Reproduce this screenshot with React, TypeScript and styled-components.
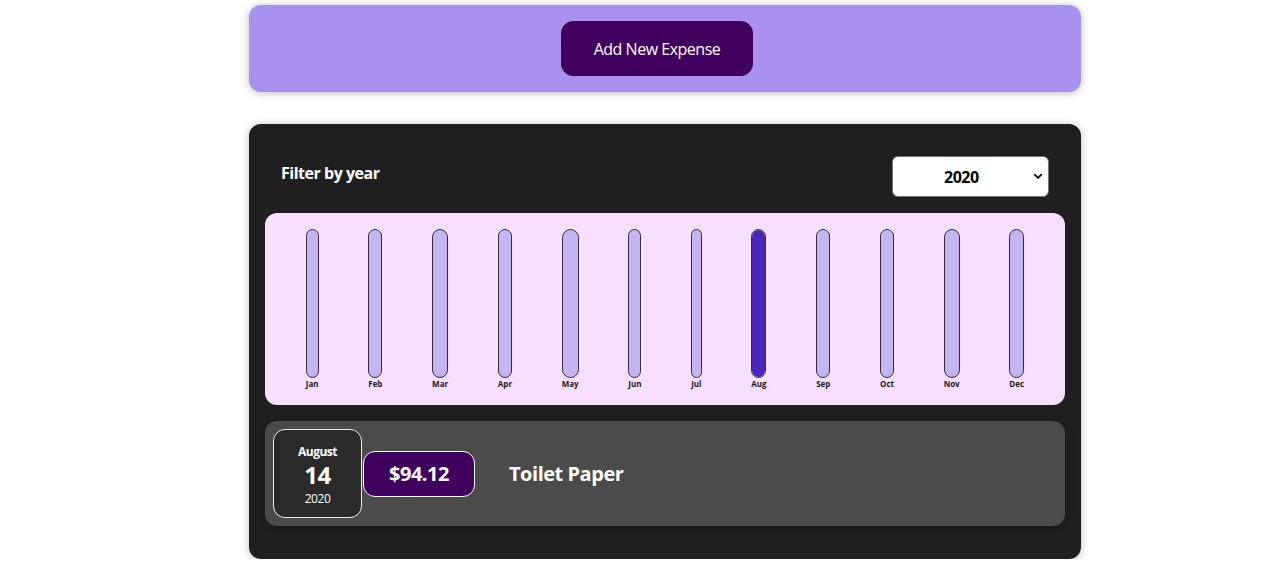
import React from "react";
import styled, { createGlobalStyle } from "styled-components";

const GlobalStyle = createGlobalStyle`
  * { box-sizing: border-box; }
  html { font-family: "Open Sans", "Noto Sans", sans-serif; letter-spacing: -0.03em; }
  body { margin: 0; background: #ffffff; }
`;

const Page = styled.div`
  padding: 5px 0 0 47px;
`;

const NewExpensePanel = styled.div`
  background-color: #a892ee;
  padding: 16px;
  margin: 0 auto 32px;
  width: 832px;
  border-radius: 12px;
  text-align: center;
  box-shadow: 0 1px 8px rgba(0, 0, 0, 0.25);
`;

const AddButton = styled.button`
  font: inherit;
  font-size: 16px;
  line-height: 21px;
  letter-spacing: -0.03em;
  cursor: pointer;
  padding: 17px 32px 15px;
  border: 1px solid #40005d;
  background-color: #40005d;
  color: white;
  border-radius: 12px;
  margin-right: 16px;
`;

const ExpensesPanel = styled.div`
  padding: 16px 16px 17px;
  background-color: rgb(31, 31, 31);
  margin: 0 auto;
  width: 832px;
  border-radius: 12px;
  box-shadow: 0 1px 8px rgba(0, 0, 0, 0.25);
`;

const Filter = styled.div`
  color: white;
  padding: 0 16px;
`;

const FilterControl = styled.div`
  display: flex;
  width: 100%;
  align-items: center;
  justify-content: space-between;
  margin: 16px 0;
`;

const FilterLabel = styled.label`
  font-weight: bold;
  font-size: 16px;
  margin-bottom: 8px;
`;

const SelectWrap = styled.div`
  position: relative;
  width: 157px;
  height: 41px;
`;

const YearSelect = styled.select`
  appearance: none;
  -webkit-appearance: none;
  font: inherit;
  font-weight: bold;
  font-size: 16px;
  letter-spacing: -0.03em;
  color: #000;
  background: #fff;
  width: 100%;
  height: 100%;
  padding: 0 20px 0 51px;
  border: 1px solid #767676;
  border-radius: 6px;
`;

const Chevron = styled.svg`
  position: absolute;
  right: 6px;
  top: 17px;
  pointer-events: none;
`;

const Chart = styled.div`
  padding: 16px;
  border-radius: 12px;
  background-color: #f8dfff;
  text-align: center;
  display: flex;
  justify-content: space-around;
  height: 192px;
`;

const ChartBarCol = styled.div`
  height: 100%;
  display: flex;
  flex-direction: column;
  align-items: center;
`;

const ChartBarInner = styled.div`
  height: 100%;
  width: 100%;
  border: 1px solid #313131;
  border-radius: 12px;
  background-color: #c3b4f3;
  display: flex;
  flex-direction: column;
  justify-content: flex-end;
  overflow: hidden;
`;

const ChartBarFill = styled.div`
  background-color: #4826b9;
  width: 100%;
`;

const ChartBarLabel = styled.div`
  font-weight: bold;
  font-size: 8px;
  line-height: 11px;
  letter-spacing: 0;
  text-align: center;
  color: #1a1a1a;
`;

const ExpenseItem = styled.div`
  display: flex;
  align-items: center;
  box-shadow: 0 2px 8px rgba(0, 0, 0, 0.25);
  padding: 8px;
  margin: 16px 0;
  border-radius: 12px;
  background-color: #4b4b4b;
`;

const DateBox = styled.div`
  display: flex;
  flex-direction: column;
  width: 89px;
  height: 89px;
  padding-top: 2px;
  border: 1px solid #ececec;
  background-color: #2a2a2a;
  color: white;
  border-radius: 12px;
  align-items: center;
  justify-content: center;
`;

const DateMonth = styled.div`
  font-size: 12px;
  font-weight: bold;
  line-height: 17px;
`;

const DateDay = styled.div`
  font-size: 24px;
  font-weight: bold;
  line-height: 30px;
`;

const DateYear = styled.div`
  font-size: 12px;
  line-height: 17px;
`;

const Price = styled.div`
  font-size: 20px;
  line-height: 27px;
  font-weight: bold;
  color: white;
  background-color: #40005d;
  border: 1px solid white;
  padding: 8px 25px 9px;
  border-radius: 12px;
  margin-left: 1px;
`;

const Title = styled.h2`
  font-size: 20px;
  margin: 0 0 0 34px;
  color: white;
  flex: 1;
`;

const months = ["Jan", "Feb", "Mar", "Apr", "May", "Jun", "Jul", "Aug", "Sep", "Oct", "Nov", "Dec"];
const values = [0, 0, 0, 0, 0, 0, 0, 94.12, 0, 0, 0, 0];

export default function App() {
  const max = Math.max(...values);
  return (
    <>
      <GlobalStyle />
      <Page>
        <NewExpensePanel>
          <AddButton>Add New Expense</AddButton>
        </NewExpensePanel>
        <ExpensesPanel>
          <Filter>
            <FilterControl>
              <FilterLabel>Filter by year</FilterLabel>
              <SelectWrap>
                <YearSelect defaultValue="2020">
                  <option value="2022">2022</option>
                  <option value="2021">2021</option>
                  <option value="2020">2020</option>
                  <option value="2019">2019</option>
                </YearSelect>
                <Chevron width="10" height="7" viewBox="0 0 10 7">
                  <path d="M1.2 1.2 L5 5 L8.8 1.2" fill="none" stroke="#111" strokeWidth="1.8" />
                </Chevron>
              </SelectWrap>
            </FilterControl>
          </Filter>
          <Chart>
            {months.map((m, i) => (
              <ChartBarCol key={m}>
                <ChartBarInner>
                  <ChartBarFill style={{ height: `${max ? (values[i] / max) * 100 : 0}%` }} />
                </ChartBarInner>
                <ChartBarLabel>{m}</ChartBarLabel>
              </ChartBarCol>
            ))}
          </Chart>
          <ExpenseItem>
            <DateBox>
              <DateMonth>August</DateMonth>
              <DateDay>14</DateDay>
              <DateYear>2020</DateYear>
            </DateBox>
            <Price>$94.12</Price>
            <Title>Toilet Paper</Title>
          </ExpenseItem>
        </ExpensesPanel>
      </Page>
    </>
  );
}
